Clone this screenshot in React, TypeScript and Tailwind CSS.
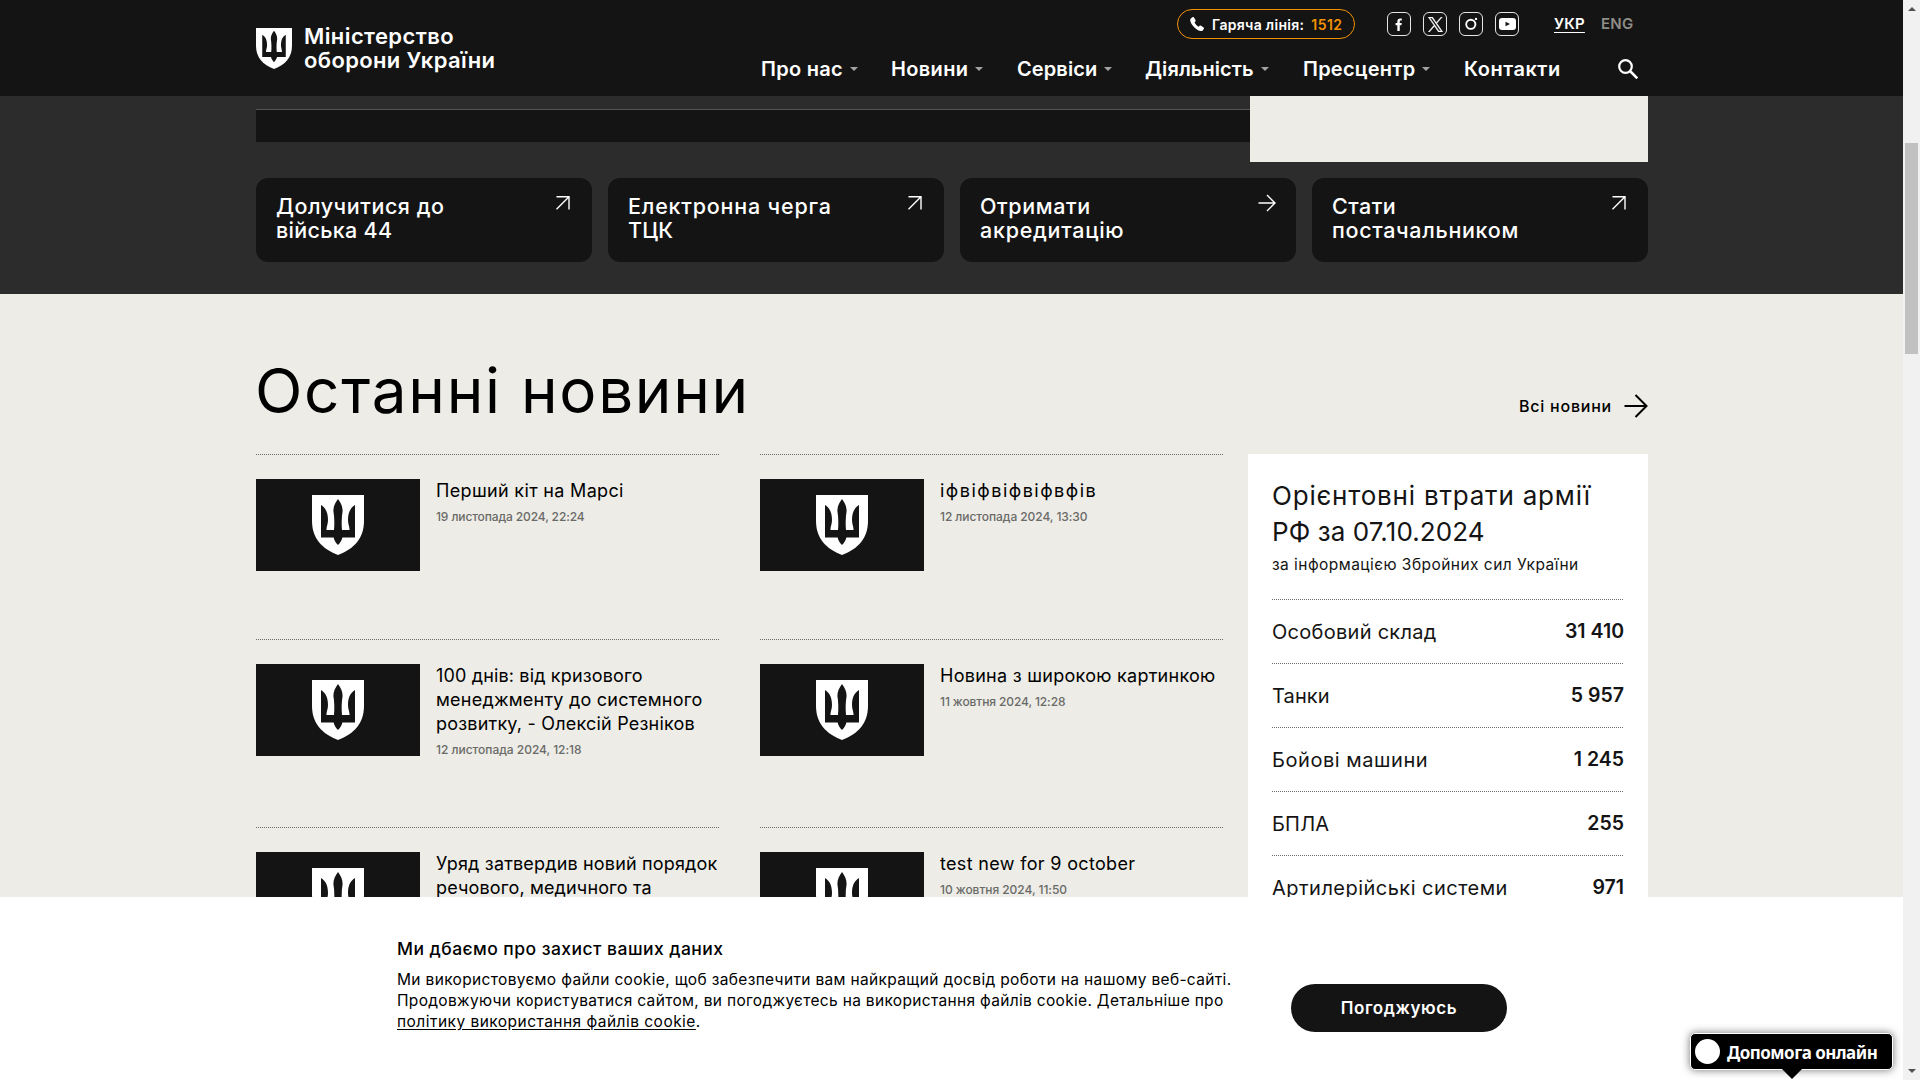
import React from "react";

type Txt = { t: string; c: string };

const NAV = [
  { t: "Про нас", c: "tracking-[0.28px]", w: "w-[130px]", caret: true },
  { t: "Новини", c: "tracking-[0.35px]", w: "w-[126px]", caret: true },
  { t: "Сервіси", c: "tracking-[0.1px]", w: "w-[128px]", caret: true },
  { t: "Діяльність", c: "tracking-[0.07px]", w: "w-[158px]", caret: true },
  { t: "Пресцентр", c: "tracking-[0.24px]", w: "w-[161px]", caret: true },
  { t: "Контакти", c: "tracking-[0.5px]", w: "w-[96px]", caret: false },
];

const CARDS: { lines: Txt[]; ext: boolean }[] = [
  { lines: [{ t: "Долучитися до", c: "tracking-[0.55px]" }, { t: "війська 44", c: "tracking-[0.3px]" }], ext: true },
  { lines: [{ t: "Електронна черга", c: "tracking-[0.8px]" }, { t: "ТЦК", c: "tracking-[0.2px]" }], ext: true },
  { lines: [{ t: "Отримати", c: "tracking-[0.6px]" }, { t: "акредитацію", c: "tracking-[0.74px]" }], ext: false },
  { lines: [{ t: "Стати", c: "tracking-[0.5px]" }, { t: "постачальником", c: "tracking-[0.68px]" }], ext: true },
];

const NEWS: { lines: Txt[]; date?: Txt; h: string }[] = [
  { lines: [{ t: "Перший кіт на Марсі", c: "tracking-[0.33px]" }], date: { t: "19 листопада 2024, 22:24", c: "tracking-[-0.12px]" }, h: "h-[185px]" },
  { lines: [{ t: "іфвіфвіфвіфвфів", c: "tracking-[1.5px]" }], date: { t: "12 листопада 2024, 13:30", c: "tracking-[-0.07px]" }, h: "h-[185px]" },
  {
    lines: [
      { t: "100 днів: від кризового", c: "tracking-[0.15px]" },
      { t: "менеджменту до системного", c: "tracking-[0.23px]" },
      { t: "розвитку, - Олексій Резніков", c: "tracking-[0.2px]" },
    ],
    date: { t: "12 листопада 2024, 12:18", c: "tracking-[-0.03px]" },
    h: "h-[188px]",
  },
  { lines: [{ t: "Новина з широкою картинкою", c: "tracking-[0.27px]" }], date: { t: "11 жовтня 2024, 12:28", c: "tracking-[-0.1px]" }, h: "h-[188px]" },
  {
    lines: [
      { t: "Уряд затвердив новий порядок", c: "tracking-[0.17px]" },
      { t: "речового, медичного та", c: "tracking-[0.15px]" },
    ],
    h: "h-[188px]",
  },
  { lines: [{ t: "test new for 9 october", c: "tracking-[0.33px]" }], date: { t: "10 жовтня 2024, 11:50", c: "tracking-[-0.05px]" }, h: "h-[188px]" },
];

const LOSSES = [
  { t: "Особовий склад", c: "tracking-[0.28px]", v: "31 410" },
  { t: "Танки", c: "tracking-[0.1px]", v: "5 957" },
  { t: "Бойові машини", c: "tracking-[0.55px]", v: "1 245" },
  { t: "БПЛА", c: "tracking-[0.2px]", v: "255" },
  { t: "Артилерійські системи", c: "tracking-[0.47px]", v: "971" },
];

function Shield({ className }: { className: string }) {
  return (
    <svg viewBox="0 0 52 60" preserveAspectRatio="none" className={className}>
      <path d="M0 0H52V26C52 43 42 54 26 60C10 54 0 43 0 26Z" fill="#fff" />
      <path
        d="M9 10C14 13 16 18 16 25C16 29 14.6 31 14.4 35H22C22.6 28 22.4 22 21.4 16C21.4 11 23.4 7.500 26 4C28.600 7.500 30.600 11 30.600 16C29.600 22 29.400 28 30 35H37.600C37.400 31 36 29 36 25C36 18 38 13 43 10V42.500H30.400C29.600 45.500 28 48 26 50C24 48 22.400 45.500 21.600 42.500H9Z"
        fill="#141414"
      />
    </svg>
  );
}

function Rule() {
  return <div className="h-px w-full shrink-0 bg-[repeating-linear-gradient(90deg,#6b6b6b_0_1px,transparent_1px_2px)]" />;
}

function Social({ children }: { children: React.ReactNode }) {
  return <span className="flex h-6 w-6 items-center justify-center rounded-[6px] border border-[#e6e6e6]">{children}</span>;
}

function Header() {
  return (
    <header className="flex h-24 shrink-0 bg-[#141414] pl-64 text-white">
      <div className="flex w-[505px] gap-3 pt-7">
        <Shield className="h-[41px] w-9" />
        <div className="-mt-1 whitespace-nowrap text-[22px] font-semibold leading-6">
          <div className="tracking-[0.4px]">Міністерство</div>
          <div className="tracking-[0.36px]">оборони України</div>
        </div>
      </div>
      <div className="flex w-[887px] flex-col">
        <div className="mt-[9px] flex h-[30px] items-center pl-[416px]">
          <div className="flex h-[30px] w-[178px] items-center rounded-full border border-[#f39200] pl-3 text-[14px] font-semibold whitespace-nowrap">
            <svg viewBox="3 3 18 18" className="h-[14px] w-[14px]" fill="#fff">
              <path d="M8.100 3.500C7.600 2.900 6.700 2.900 6.100 3.300L4 5C2.700 6.200 3.100 9 5.200 12.300C7.300 15.500 10.500 18.800 14 20.300C16.400 21.300 18.500 21.300 19.400 20.200L20.600 18.500C21.200 17.900 21.100 17 20.500 16.500L17.200 14.200C16.700 13.800 16 13.800 15.500 14.200L13.900 15.500C12.200 14.600 10 12.400 8.800 10.200L9.900 8.700C10.300 8.200 10.300 7.500 10 7Z" />
            </svg>
            <span className="ml-2 tracking-[0.3px]">Гаряча лінія:</span>
            <span className="ml-[7px] tracking-[0.45px] text-[#f39200]">1512</span>
          </div>
          <div className="ml-8 flex gap-3">
            <Social>
              <svg viewBox="0 0 8 14" className="h-[13px] w-[8px]" fill="#fff">
                <path d="M2.200 14V7.800H.3V5.400H2.200V3.700C2.200 1.600 3.300.5 5.300.5C6.100.5 6.900.6 7 .6V2.800H5.900C5.100 2.800 4.800 3.200 4.800 3.900V5.400H7L6.600 7.800H4.800V14Z" />
              </svg>
            </Social>
            <Social>
              <svg viewBox="0 0 24 24" className="h-[15px] w-[15px]" fill="#fff" stroke="#fff" strokeWidth="0.6">
                <path d="M14.230 10.160 22.980 0h-2.070l-7.600 8.820L7.250 0H.25l9.180 13.340L.25 24h2.070l8.030-9.320L16.750 24h7zM3.070 1.560h3.180l14.630 20.930h-3.180z" />
              </svg>
            </Social>
            <Social>
              <svg viewBox="0 0 16 16" className="h-4 w-4" fill="none" stroke="#fff" strokeWidth="1.9">
                <circle cx="7.800" cy="8.300" r="4.600" />
                <circle cx="13" cy="2.900" r="1.200" fill="#fff" stroke="none" />
              </svg>
            </Social>
            <Social>
              <svg viewBox="0 0 17 12" className="h-3 w-[17px]">
                <rect width="17" height="12" rx="3" fill="#fff" />
                <path d="M6.500 3.700L11 6L6.500 8.300Z" fill="#141414" />
              </svg>
            </Social>
          </div>
          <span className="ml-[35px] text-[15px] font-semibold tracking-[0.2px] underline underline-offset-[3px]">УКР</span>
          <span className="ml-4 text-[15px] font-semibold tracking-[0.3px] text-[#8f8d87]">ENG</span>
        </div>
        <nav className="mt-[15px] flex h-[30px] items-center whitespace-nowrap text-xl font-semibold">
          {NAV.map((n) => (
            <div key={n.t} className={"flex shrink-0 items-center " + n.w}>
              <span className={n.c}>{n.t}</span>
              {n.caret && (
                <svg viewBox="0 0 8 4" className="ml-[7px] h-1 w-2">
                  <path d="M0 0H8L4 4Z" fill="#a3a3a3" />
                </svg>
              )}
            </div>
          ))}
          <svg viewBox="0 0 20 20" className="ml-[58px] h-5 w-5" fill="none" stroke="#fff" strokeWidth="2.200">
            <circle cx="7.500" cy="7.500" r="6.300" />
            <path d="M12 12L19.300 19.300" strokeWidth="2.600" />
          </svg>
        </nav>
      </div>
    </header>
  );
}

export default function App() {
  return (
    <div className="relative flex h-[1080px] w-[1920px] overflow-hidden bg-[#edece6] font-['Inter',sans-serif] text-black">
      <div className="flex h-full w-[1903px] flex-col overflow-hidden">
        <Header />
        <section className="h-[198px] shrink-0 bg-[#2c2c2c] px-64">
          <div className="flex h-[66px] w-[1392px]">
            <div className="mt-[13px] h-[33px] w-[994px] border-t border-[#555] bg-[#141414]" />
            <div className="h-[66px] w-[398px] bg-[#edece6]" />
          </div>
          <div className="mt-4 flex w-[1392px] gap-4">
            {CARDS.map((k) => (
              <div key={k.lines[0].t} className="flex h-[84px] w-[336px] justify-between rounded-xl bg-[#141414] px-5 pt-4 text-white">
                <div className="whitespace-nowrap text-[21.5px] font-medium leading-6">
                  {k.lines.map((l) => (
                    <div key={l.t} className={l.c}>{l.t}</div>
                  ))}
                </div>
                <svg viewBox="0 0 18 18" className="h-[18px] w-[18px]" fill="none" stroke="#fff" strokeWidth="1.400">
                  {k.ext ? <path d="M2.500 2.800H15V15.500M15 2.800L2.500 15.300" /> : <path d="M0.500 9H17M9 1L17 9L9 17" />}
                </svg>
              </div>
            ))}
          </div>
        </section>

        <main className="flex h-[603px] shrink-0 flex-col overflow-hidden pl-64">
          <div className="flex h-40 w-[1392px] shrink-0 items-end justify-between">
            <h1 className="mb-[27px] -ml-px text-[62px] leading-[72px] tracking-[1.7px]">Останні новини</h1>
            <div className="mb-9 flex items-center text-base font-medium">
              <span className="leading-6 tracking-[0.78px]">Всі новини</span>
              <svg viewBox="0 0 24 24" className="ml-3 h-6 w-6" fill="none" stroke="#000" strokeWidth="2">
                <path d="M0.500 12H22.500M11.500 1L22.500 12L11.500 23" />
              </svg>
            </div>
          </div>
          <div className="flex w-[1392px] shrink-0 gap-6">
            <div className="grid w-[968px] grid-cols-[464px_464px] content-start gap-x-10">
              {NEWS.map((n) => (
                <article key={n.lines[0].t} className={n.h}>
                  <Rule />
                  <div className="mt-6 flex gap-4">
                    <div className="flex h-[92px] w-[164px] shrink-0 justify-center bg-[#141414] pt-4">
                      <Shield className="h-[60px] w-[52px]" />
                    </div>
                    <div className="whitespace-nowrap text-lg leading-6">
                      {n.lines.map((l) => (
                        <div key={l.t} className={l.c}>{l.t}</div>
                      ))}
                      {n.date && <div className={"mt-[6px] text-xs font-medium leading-4 text-[#6a6a68] " + n.date.c}>{n.date.t}</div>}
                    </div>
                  </div>
                </article>
              ))}
            </div>
            <aside className="h-[640px] w-[400px] bg-white px-6 pt-6 text-[#141414]">
              <div className="whitespace-nowrap text-[26px] leading-9">
                <div className="tracking-[0.8px]">Орієнтовні втрати армії</div>
                <div className="tracking-[0.1px]">РФ за 07.10.2024</div>
              </div>
              <div className="mb-[18px] mt-1 h-[27px] whitespace-nowrap text-[15.5px] leading-[22px] tracking-[0.46px]">
                за інформацією Збройних сил України
              </div>
              {LOSSES.map((l) => (
                <div key={l.t} className="h-16">
                  <Rule />
                  <div className="flex h-[63px] items-center justify-between text-xl">
                    <span className={l.c}>{l.t}</span>
                    <span className="text-[19.5px] font-semibold">{l.v}</span>
                  </div>
                </div>
              ))}
            </aside>
          </div>
        </main>

        <section className="flex h-[183px] shrink-0 bg-white pl-[396px]">
          <div className="w-[895px] whitespace-nowrap pt-10">
            <div className="ml-px text-[17.5px] font-medium leading-6 tracking-[0.46px]">Ми дбаємо про захист ваших даних</div>
            <div className="ml-px mt-2 text-[15.5px] leading-[21px]">
              <div className="tracking-[0.34px]">Ми використовуємо файли cookie, щоб забезпечити вам найкращий досвід роботи на нашому веб-сайті.</div>
              <div className="tracking-[0.32px]">Продовжуючи користуватися сайтом, ви погоджуєтесь на використання файлів cookie. Детальніше про</div>
              <div className="tracking-[0.47px]">
                <span className="underline underline-offset-[2px]">політику використання файлів cookie</span>.
              </div>
            </div>
          </div>
          <button className="mt-[87px] h-12 w-[216px] rounded-full bg-[#141414] pt-[2px] text-[17px] font-semibold tracking-[0.6px] text-white">Погоджуюсь</button>
        </section>
      </div>

      <div className="flex h-full w-[17px] flex-col items-center bg-[#f1f1f1]">
        <svg viewBox="0 0 8 4" className="mt-[7px] h-1 w-2"><path d="M4 0L8 4H0Z" fill="#505050" /></svg>
        <div className="mt-[132px] h-[211px] w-[13px] bg-[#c1c1c1]" />
        <svg viewBox="0 0 8 4" className="mb-[7px] mt-auto h-1 w-2"><path d="M0 0H8L4 4Z" fill="#505050" /></svg>
      </div>

      <div className="absolute left-[1690px] top-[1033px] flex w-[203px] flex-col items-center">
        <div className="flex h-[37px] w-full items-center rounded-[5px] border border-white bg-black pl-1 shadow-[0_0_8px_rgba(0,0,0,0.55)]">
          <span className="h-[25px] w-[25px] shrink-0 rounded-full bg-white" />
          <span className="ml-[7px] mt-[3px] whitespace-nowrap font-['Noto_Sans',sans-serif] text-[17px] font-bold leading-6 tracking-[-0.5px] text-white">Допомога онлайн</span>
        </div>
        <svg viewBox="0 0 20 10" className="-mt-px h-[10px] w-5"><path d="M0 0H20L10 10Z" fill="#000" /></svg>
      </div>
    </div>
  );
}
